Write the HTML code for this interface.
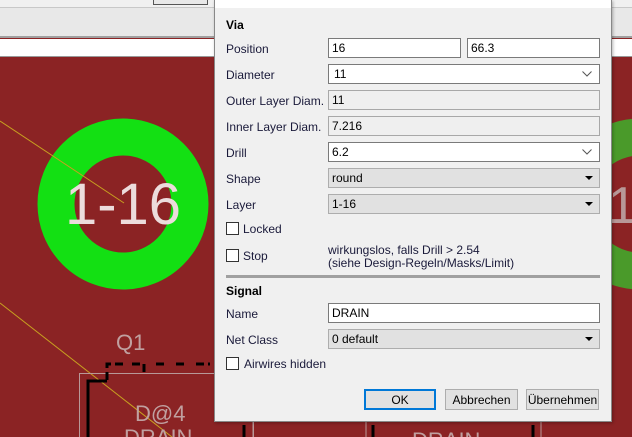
<!DOCTYPE html>
<html><head><meta charset="utf-8"><style>
*{margin:0;padding:0;box-sizing:border-box}
body{width:632px;height:437px;overflow:hidden;position:relative;background:#8b2324;font-family:"Liberation Sans",sans-serif;font-size:12px;color:#000}
.a{position:absolute}
.lbl{position:absolute;left:226px;color:#1a1a3a}
.f{position:absolute;left:328px;width:272px;height:20px;border:1px solid #7a7a7a;background:#fff;padding:2px 0 0 3px}
.g{background:#efefef;border-color:#a8a8a8}
.c{background:#e1e1e1;border-color:#adadad}
.cb{position:absolute;left:226px;width:13px;height:13px;border:1px solid #333;background:#fff}
.btn{position:absolute;top:389px;height:21px;border:1px solid #adadad;background:#e1e1e1;text-align:center;padding-top:3px}
.arr{position:absolute;right:6px;top:7px;width:0;height:0;border-left:4px solid transparent;border-right:4px solid transparent;border-top:4px solid #000}
.chev{position:absolute;right:7px;top:6px;width:10px;height:6px}
</style></head><body>
<div class="a" style="left:0;top:0;width:632px;height:38px;background:#e8e8e8;border-bottom:2px solid #a0a0a0"></div>
<div class="a" style="left:0;top:0;width:632px;height:8px;background:#f0f0f0;border-bottom:1px solid #c8c8c8"></div>
<div class="a" style="left:153px;top:0;width:55px;height:5px;border:1px solid #555;border-top:none;background:#e8e8e8"></div>
<div class="a" style="left:0;top:39px;width:632px;height:18px;background:#fff;border-bottom:1px solid #999"></div>
<svg class="a" style="left:0;top:0" width="632" height="437">
<circle cx="123" cy="204" r="67" fill="none" stroke="#13e013" stroke-width="37"/>
<circle cx="640" cy="204" r="67" fill="none" stroke="#4a9a2a" stroke-width="37"/>
<line x1="0" y1="121" x2="124" y2="203" stroke="#c8a020" stroke-width="1"/>
<line x1="0" y1="303" x2="172" y2="437" stroke="#c8a020" stroke-width="1"/>
<text x="123" y="224" font-size="58" fill="#ecdcdc" text-anchor="middle" font-family="Liberation Sans">1-16</text>
<text x="608" y="223" font-size="52" fill="#b89898" font-family="Liberation Sans">1</text>
<text x="116" y="350" font-size="22" fill="#c0a0a0" font-family="Liberation Sans">Q1</text>
<rect x="79.5" y="373.5" width="174" height="70" fill="none" stroke="#b89898"/>
<path d="M107 380V364H125M132 364H144V376M156 364H165M176 364H188M196 364H210" fill="none" stroke="#000" stroke-width="3" stroke-dasharray="8 4"/>
<path d="M88 437V381H107" fill="none" stroke="#000" stroke-width="3"/>
<text x="135" y="421" font-size="22" fill="#c0a0a0" font-family="Liberation Sans">D@4</text>
<text x="124" y="445" font-size="22" fill="#c0a0a0" font-family="Liberation Sans">DRAIN</text>
<text x="412" y="448" font-size="22" fill="#c0a0a0" font-family="Liberation Sans">DRAIN</text>
<line x1="244" y1="425" x2="244" y2="437" stroke="#000" stroke-width="3"/>
<line x1="373" y1="425" x2="373" y2="437" stroke="#000" stroke-width="3"/>
<line x1="533" y1="425" x2="533" y2="437" stroke="#000" stroke-width="3"/>
<line x1="253" y1="422" x2="253" y2="437" stroke="#b89898"/>
<line x1="366" y1="422" x2="366" y2="437" stroke="#b89898"/>
<line x1="541" y1="422" x2="541" y2="437" stroke="#b89898"/>
</svg>
<div class="a" style="left:214px;top:0;width:398px;height:422px;background:#f0f0f0;border:1px solid #888;border-top:none;box-shadow:1px 1px 3px rgba(0,0,0,.3)"></div>
<div class="a" style="left:215px;top:0;width:396px;height:8px;background:#fff"></div>
<div class="lbl" style="top:18px;font-weight:bold;color:#000">Via</div>
<div class="lbl" style="top:42px">Position</div>
<div class="f" style="top:38px;width:133px">16</div>
<div class="f" style="top:38px;left:467px;width:133px">66.3</div>
<div class="lbl" style="top:68px">Diameter</div>
<div class="f" style="top:64px;padding-left:5px">11<svg class="chev" viewBox="0 0 10 6"><path d="M0.5 0.5L5 5L9.5 0.5" fill="none" stroke="#555"/></svg></div>
<div class="lbl" style="top:94px">Outer Layer Diam.</div>
<div class="f g" style="top:90px">11</div>
<div class="lbl" style="top:120px">Inner Layer Diam.</div>
<div class="f g" style="top:116px">7.216</div>
<div class="lbl" style="top:146px">Drill</div>
<div class="f" style="top:142px">6.2<svg class="chev" viewBox="0 0 10 6"><path d="M0.5 0.5L5 5L9.5 0.5" fill="none" stroke="#555"/></svg></div>
<div class="lbl" style="top:172px">Shape</div>
<div class="f c" style="top:168px">round<span class="arr"></span></div>
<div class="lbl" style="top:198px">Layer</div>
<div class="f c" style="top:194px">1-16<span class="arr"></span></div>
<div class="cb" style="top:222px"></div><div class="lbl" style="left:243px;top:222px">Locked</div>
<div class="cb" style="top:249px"></div><div class="lbl" style="left:243px;top:249px">Stop</div>
<div class="a" style="left:328px;top:244px;line-height:13px;color:#1a1a3a">wirkungslos, falls Drill &gt; 2.54<br>(siehe Design-Regeln/Masks/Limit)</div>
<div class="a" style="left:226px;top:275px;width:374px;height:3px;background:#a0a0a0"></div>
<div class="lbl" style="top:284px;font-weight:bold;color:#000">Signal</div>
<div class="lbl" style="top:307px">Name</div>
<div class="f" style="top:303px">DRAIN</div>
<div class="lbl" style="top:333px">Net Class</div>
<div class="f c" style="top:329px">0 default<span class="arr"></span></div>
<div class="cb" style="top:357px"></div><div class="lbl" style="left:244px;top:357px">Airwires hidden</div>
<div class="btn" style="left:364px;width:72px;border:2px solid #0078d7;padding-top:2px">OK</div>
<div class="btn" style="left:445px;width:73px">Abbrechen</div>
<div class="btn" style="left:526px;width:73px">Übernehmen</div>
</body></html>
